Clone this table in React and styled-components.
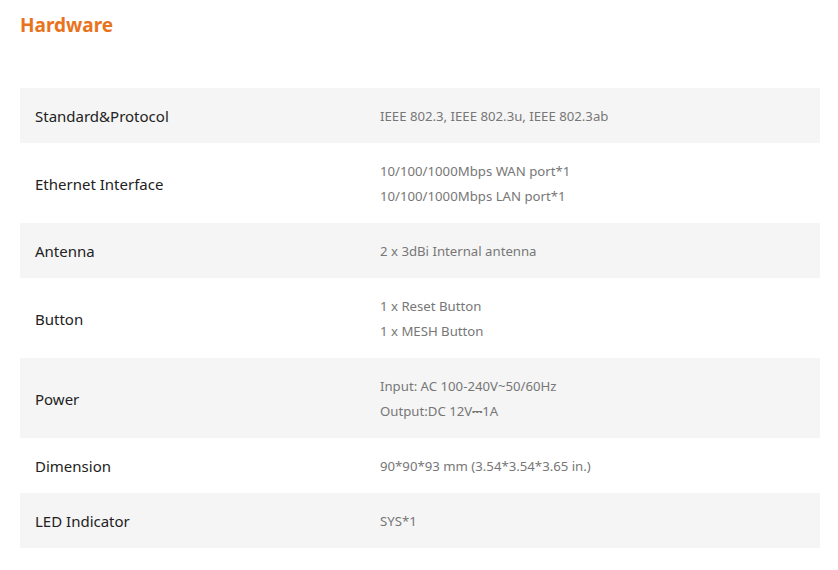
import React from "react";
import styled, { createGlobalStyle } from "styled-components";

const Global = createGlobalStyle`
  html, body { margin: 0; padding: 0; background: #fff; }
  body { font-family: "Noto Sans", "Open Sans", sans-serif; }
`;

const Page = styled.div`
  padding: 12px 18px 0 20px;
`;

const Title = styled.h2`
  margin: 0;
  font-size: 19px;
  line-height: 26px;
  font-weight: 700;
  color: #e9731c;
`;

const Table = styled.div`
  margin-top: 50px;
  display: flex;
  flex-direction: column;
`;

const Row = styled.div`
  display: grid;
  grid-template-columns: 360px 1fr;
  align-items: center;
  padding: 16px 0 14px;
  background: ${(p) => (p.$shaded ? "#f5f5f5" : "#fff")};
`;

const Label = styled.div`
  padding-left: 15px;
  font-size: 15px;
  line-height: 25px;
  color: #222;
`;

const Values = styled.div`
  display: flex;
  flex-direction: column;
`;

const Value = styled.div`
  font-size: 13.2px;
  line-height: 25px;
  color: #777;
`;

const rows = [
  ["Standard&Protocol", ["IEEE 802.3, IEEE 802.3u, IEEE 802.3ab"]],
  ["Ethernet Interface", ["10/100/1000Mbps WAN port*1", "10/100/1000Mbps LAN port*1"]],
  ["Antenna", ["2 x 3dBi Internal antenna"]],
  ["Button", ["1 x Reset Button", "1 x MESH Button"]],
  ["Power", ["Input: AC 100-240V~50/60Hz", "Output:DC 12V\u23931A"]],
  ["Dimension", ["90*90*93 mm (3.54*3.54*3.65 in.)"]],
  ["LED Indicator", ["SYS*1"]],
];

export default function App() {
  return (
    <>
      <Global />
      <Page>
        <Title>Hardware</Title>
        <Table>
          {rows.map(([label, vals], i) => (
            <Row key={label} $shaded={i % 2 === 0}>
              <Label>{label}</Label>
              <Values>
                {vals.map((v) => (
                  <Value key={v}>{v}</Value>
                ))}
              </Values>
            </Row>
          ))}
        </Table>
      </Page>
    </>
  );
}
